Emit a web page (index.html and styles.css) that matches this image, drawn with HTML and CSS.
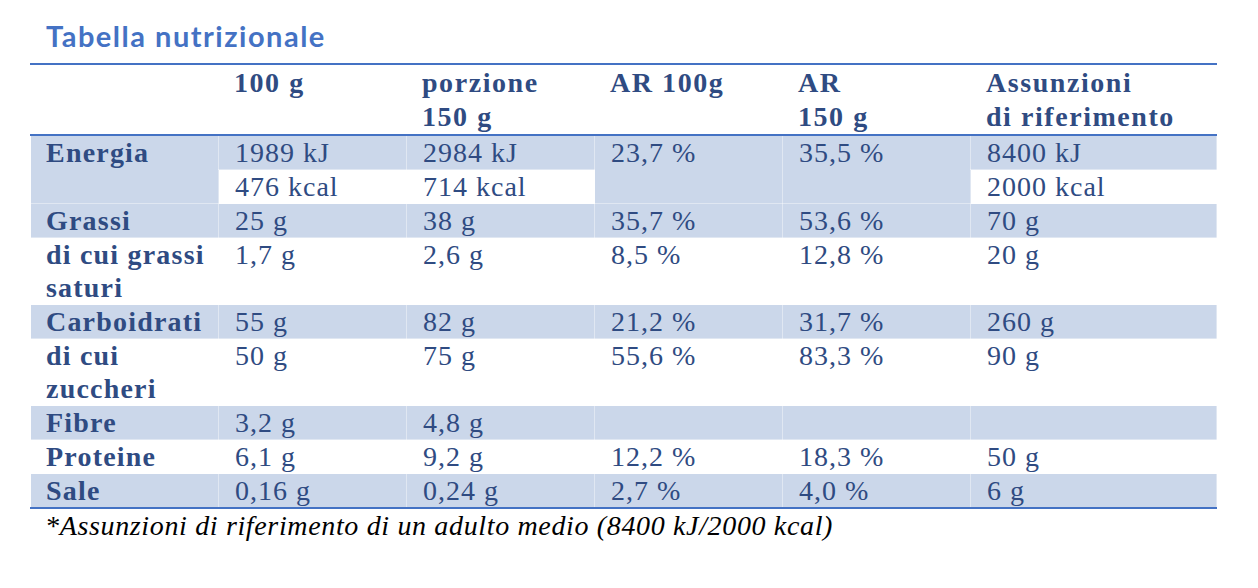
FILE: index.html
```html
<!DOCTYPE html>
<html lang="it">
<head>
<meta charset="utf-8">
<title>Tabella nutrizionale</title>
<link rel="stylesheet" href="styles.css">
</head>
<body>
<main class="page">
  <h1 class="title">Tabella nutrizionale</h1>
  <table class="nutri">
    <colgroup>
      <col class="c-label">
      <col class="c-val">
      <col class="c-val">
      <col class="c-val">
      <col class="c-val">
      <col class="c-last">
    </colgroup>
    <thead>
      <tr>
        <th></th>
        <th>100 g</th>
        <th>porzione<br>150 g</th>
        <th>AR 100g</th>
        <th>AR<br>150 g</th>
        <th>Assunzioni<br>di riferimento</th>
      </tr>
    </thead>
    <tbody>
      <tr class="shade">
        <td class="label" rowspan="2">Energia</td>
        <td>1989 kJ</td>
        <td>2984 kJ</td>
        <td rowspan="2">23,7 %</td>
        <td rowspan="2">35,5 %</td>
        <td>8400 kJ</td>
      </tr>
      <tr class="sub">
        <td>476 kcal</td>
        <td>714 kcal</td>
        <td>2000 kcal</td>
      </tr>
      <tr class="shade">
        <td class="label">Grassi</td>
        <td>25 g</td>
        <td>38 g</td>
        <td>35,7 %</td>
        <td>53,6 %</td>
        <td>70 g</td>
      </tr>
      <tr>
        <td class="label">di cui grassi saturi</td>
        <td>1,7 g</td>
        <td>2,6 g</td>
        <td>8,5 %</td>
        <td>12,8 %</td>
        <td>20 g</td>
      </tr>
      <tr class="shade">
        <td class="label">Carboidrati</td>
        <td>55 g</td>
        <td>82 g</td>
        <td>21,2 %</td>
        <td>31,7 %</td>
        <td>260 g</td>
      </tr>
      <tr>
        <td class="label">di cui zuccheri</td>
        <td>50 g</td>
        <td>75 g</td>
        <td>55,6 %</td>
        <td>83,3 %</td>
        <td>90 g</td>
      </tr>
      <tr class="shade">
        <td class="label">Fibre</td>
        <td>3,2 g</td>
        <td>4,8 g</td>
        <td></td>
        <td></td>
        <td></td>
      </tr>
      <tr>
        <td class="label">Proteine</td>
        <td>6,1 g</td>
        <td>9,2 g</td>
        <td>12,2 %</td>
        <td>18,3 %</td>
        <td>50 g</td>
      </tr>
      <tr class="shade">
        <td class="label">Sale</td>
        <td>0,16 g</td>
        <td>0,24 g</td>
        <td>2,7 %</td>
        <td>4,0 %</td>
        <td>6 g</td>
      </tr>
    </tbody>
  </table>
  <p class="note">*Assunzioni di riferimento di un adulto medio (8400 kJ/2000 kcal)</p>
</main>
</body>
</html>
```
FILE: styles.css
```css
html, body {
  margin: 0;
  padding: 0;
  background: #ffffff;
}

.page {
  padding: 19px 0 0 30px;
  width: 1186px;
}

.title {
  margin: 0 0 10px 0;
  padding-left: 16px;
  font-family: Lato, "Open Sans", sans-serif;
  font-weight: 700;
  font-size: 29px;
  line-height: 34px;
  letter-spacing: 1.5px;
  color: #4472c4;
}

.nutri {
  width: 1186px;
  border-collapse: collapse;
  table-layout: fixed;
  font-family: "Liberation Serif", "Times New Roman", serif;
  font-size: 28px;
  line-height: 33px;
  letter-spacing: 1px;
  color: #2f4b82;
  border-top: 2px solid #4472c4;
  border-bottom: 2px solid #4472c4;
}

.c-label,
.c-val {
  width: 188px;
}

.c-last {
  width: 246px;
}

.nutri th,
.nutri td {
  text-align: left;
  vertical-align: top;
  padding: 0 0 0 16px;
  border: 1px solid rgba(255, 255, 255, 0.4);
}

.nutri th {
  font-weight: 700;
  line-height: 34px;
  letter-spacing: 1.55px;
  padding-top: 1px;
  padding-left: 15px;
  border-top: 0;
  border-bottom: 2px solid #4472c4;
}

.nutri td.label {
  padding-left: 15px;
  font-weight: 700;
  letter-spacing: 1.2px;
}

.nutri tr.shade td {
  background: #cbd7ea;
}

.nutri tr:last-child td {
  border-bottom: 0;
}

.note {
  margin: 0;
  padding-left: 15px;
  font-family: "Liberation Serif", "Times New Roman", serif;
  font-style: italic;
  font-size: 28px;
  line-height: 34px;
  letter-spacing: 0.65px;
  color: #000000;
}
```
